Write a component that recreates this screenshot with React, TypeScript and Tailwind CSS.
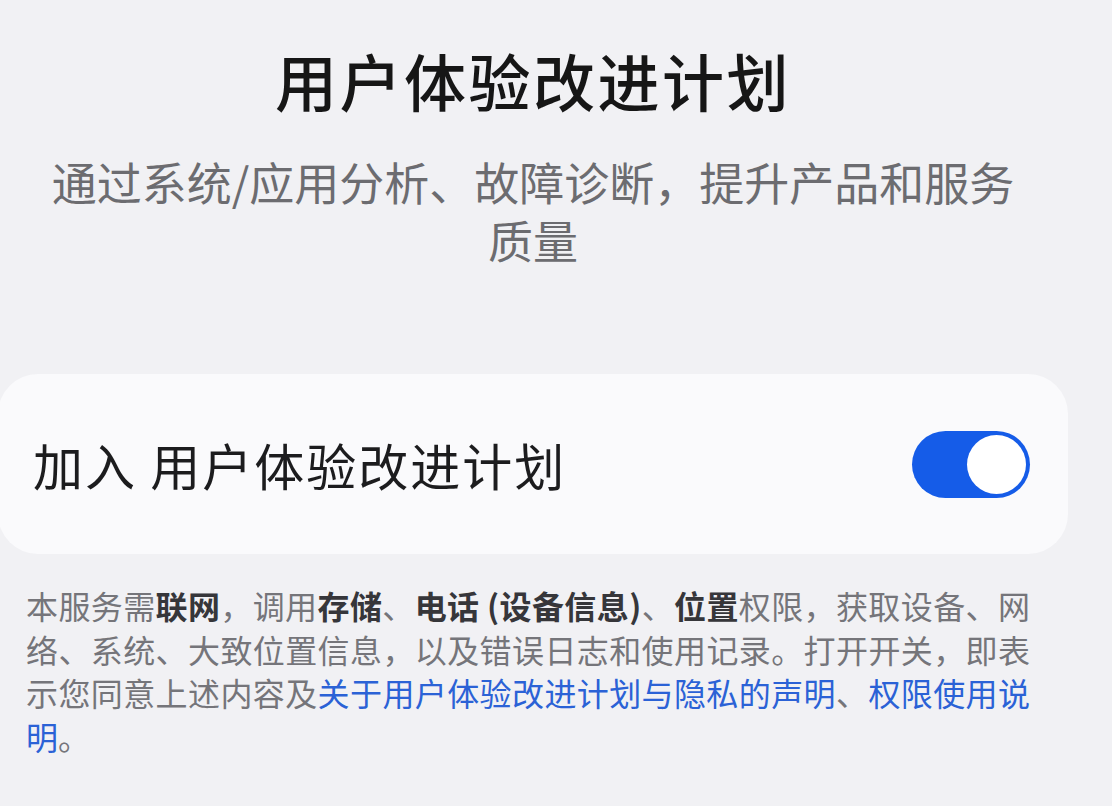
import React, { useState } from 'react';

const font = { fontFamily: '"Noto Sans CJK SC", "Noto Sans", sans-serif' };

function Toggle({ on, onChange }: { on: boolean; onChange: () => void }) {
  return (
    <button
      type="button"
      onClick={onChange}
      className={`w-[118px] h-[67px] rounded-full p-[4px] flex items-center transition-colors ${
        on ? 'bg-[#155ce8] justify-end' : 'bg-[#c9c9cf] justify-start'
      }`}
    >
      <span className="w-[59px] h-[59px] rounded-full bg-white block" />
    </button>
  );
}

export default function App() {
  const [joined, setJoined] = useState(true);

  return (
    <div className="w-[1112px] h-[806px] bg-[#f1f1f4] overflow-hidden" style={font}>
      <div className="w-[1070px] -ml-[2px] flex flex-col">
        <h1 className="pt-[49px] text-[62px] leading-none font-medium text-[#161616] text-center tracking-[2.5px]">
          用户体验改进计划
        </h1>
        <p className="mt-[42px] px-[40px] text-[45px] leading-[58px] text-[#6c6c70] text-center">
          通过系统/应用分析、故障诊断，提升产品和服务
          <br />
          质量
        </p>

        <div className="mt-[105px] h-[180px] bg-[#fafafc] rounded-[40px] pl-[35px] pr-[38px] flex items-center justify-between">
          <span className="text-[50px] leading-none text-[#1c1c1e] tracking-[2px]">加入 用户体验改进计划</span>
          <Toggle on={joined} onChange={() => setJoined(!joined)} />
        </div>

        <div className="mt-[30px] ml-[28px] w-[1004px] text-[32px] leading-[43.5px] text-[#75757a]">
          <div className="[text-align-last:justify] text-justify">
            本服务需<b className="font-semibold text-[#36363a]">联网</b>，调用
            <b className="font-semibold text-[#36363a]">存储</b>、
            <b className="font-semibold text-[#36363a]">电话 (设备信息)</b>、
            <b className="font-semibold text-[#36363a]">位置</b>权限，获取设备、网
          </div>
          <div className="[text-align-last:justify] text-justify">
            络、系统、大致位置信息，以及错误日志和使用记录。打开开关，即表
          </div>
          <div className="[text-align-last:justify] text-justify">
            示您同意上述内容及
            <a className="text-[#2b62d6]">关于用户体验改进计划与隐私的声明</a>、
            <a className="text-[#2b62d6]">权限使用说</a>
          </div>
          <div>
            <a className="text-[#2b62d6]">明</a>。
          </div>
        </div>
      </div>
    </div>
  );
}
